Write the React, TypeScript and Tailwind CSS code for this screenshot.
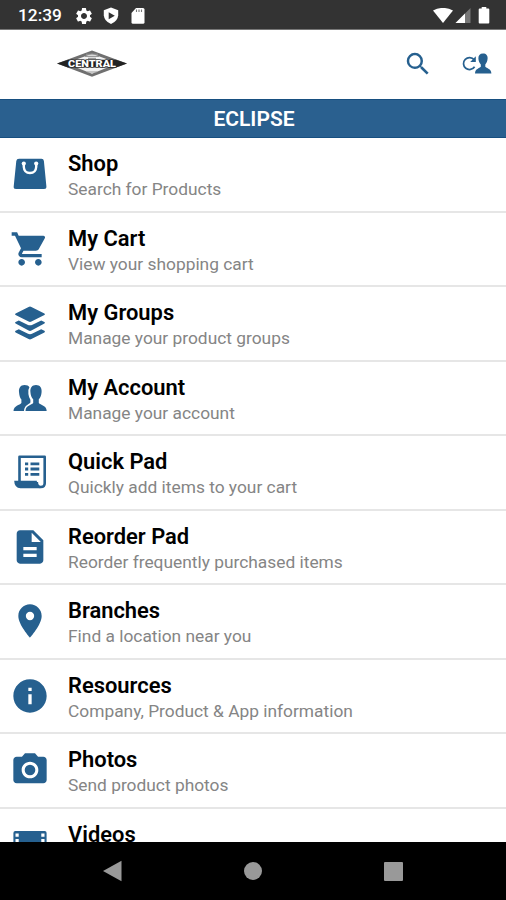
import type { ReactNode } from 'react';
import { MdDescription, MdInfo, MdLocationOn, MdPhotoCamera, MdSearch, MdSettings, MdShoppingCart } from 'react-icons/md';

type MenuItem = {
  title: string;
  subtitle?: string;
  icon: ReactNode;
};

const BagIcon = () => (
  <svg viewBox="0 0 40 40" className="h-10 w-10" fill="currentColor">
    <path d="M9 4.8H31.5Q33.6 4.8 33.9 7L36.4 32.5Q36.6 35 34 35H6Q3.4 35 3.7 32.5L6.3 7Q6.6 4.8 9 4.8Z" />
    <path d="M13.8 9.3V13Q14.2 19 20 19Q25.8 19 26.2 13V9.3" fill="none" stroke="white" strokeWidth="2.4" />
    <circle cx="13.8" cy="9.6" r="2.1" fill="white" />
    <circle cx="26.2" cy="9.6" r="2.1" fill="white" />
  </svg>
);

const LayersIcon = () => (
  <svg viewBox="0 0 40 40" className="h-10 w-10" fill="currentColor">
    <path d="M18.6 3.9Q20 3.3 21.4 3.9L34.4 10.4Q35.6 11.3 34.4 12.1L21.4 18.6Q20 19.3 18.6 18.6L5.6 12.1Q4.4 11.3 5.6 10.4Z" />
    <path d="M5.6 18.9L8.8 17.5L17.5 21.8Q20 22.9 22.5 21.8L31.2 17.5L34.4 18.9Q35.6 19.8 34.4 20.6L21.4 27.6Q20 28.3 18.6 27.6L5.6 20.6Q4.4 19.8 5.6 18.9Z" />
    <path d="M5.6 27.7L8.8 26.3L17.5 30.6Q20 31.7 22.5 30.6L31.2 26.3L34.4 27.7Q35.6 28.6 34.4 29.4L21.4 36.1Q20 36.8 18.6 36.1L5.6 29.4Q4.4 28.6 5.6 27.7Z" />
  </svg>
);

const PeopleIcon = () => (
  <svg viewBox="0 0 40 40" className="h-10 w-10" fill="currentColor">
    <path d="M14.4 7C17 7 18.6 7.8 19.4 9.2Q17.6 12 18.4 16Q18.8 19.5 20.4 21.8V24.6C19 26.6 14.6 26.8 14 33H3.5C3.6 27.6 9.8 27.2 11.4 25V21.4C10 20 9.3 17.4 9 14C8.6 9.8 10.8 7 14.4 7Z" />
    <path d="M26 7C30 7 32 9.8 31.6 14C31.4 17.4 30.4 19.6 28.8 21.2V25C30.4 27.2 36.5 27.2 36.7 33H15.5C15.7 27.2 21.6 27.2 23.2 25V21.2C21.6 19.6 20.6 17.4 20.4 14C20 9.8 22 7 26 7Z" stroke="white" strokeWidth="1.8" paintOrder="stroke" />
    <path d="M3.5 33H36.7V35H3.5Z" fill="white" />
  </svg>
);

const ListScrollIcon = () => (
  <svg viewBox="0 0 40 40" className="h-10 w-10" fill="none" stroke="currentColor">
    <path d="M9.5 29V4.8H34.7V31.2Q34.7 35 30.8 35Q26.8 35 26.8 29.9" strokeWidth="2.6" strokeLinejoin="round" />
    <path d="M4.2 28.8H26.8Q26.8 34.4 30.5 36.3H10.5Q4.4 36 4.2 28.8Z" fill="currentColor" stroke="none" />
    <path d="M15 11.8H18.2M15 17H18.2M15 22.3H18.2M20.5 11.8H29.3M20.5 17H29.3M20.5 22.3H29.3" strokeWidth="2.8" />
  </svg>
);

const FilmIcon = () => (
  <svg viewBox="0 0 40 40" className="h-10 w-10" fill="currentColor">
    <rect x="3.4" y="6" width="33.2" height="28" rx="2" />
    <path d="M5.5 8.5H8.7V11.7H5.5ZM5.5 14H8.7V17.2H5.5ZM31.3 8.5H34.5V11.7H31.3ZM31.3 14H34.5V17.2H31.3Z" fill="white" />
  </svg>
);

const SwitchUserIcon = () => (
  <svg viewBox="0 0 30 22" className="h-[22px] w-[30px]" fill="currentColor">
    <path d="M12.2 6.8A6 6 0 1 0 12.6 13.7" fill="none" stroke="currentColor" strokeWidth="1.7" />
    <path d="M13.8 3.2V8.9H8.2Z" />
    <path d="M21 .4C24.2 .4 25.9 2.4 25.6 5.6C25.4 8.4 24.5 10.2 23.3 11.4V13.8C24.6 15.6 29.2 15.5 29.4 20.4H13C13.2 15.5 17.4 15.6 18.8 13.8V11.4C17.5 10.2 16.6 8.4 16.4 5.6C16.2 2.4 17.8 .4 21 .4Z" />
  </svg>
);

const Logo = () => (
  <svg viewBox="0 0 72 28" className="h-7 w-[72px]">
    <path d="M1 13.5L36 .5L71 13.5L36 26.7Z" fill="#707070" />
    <path d="M10 13.2L36 3.8L62 13.2L36 23.8Z" fill="#f2f2f2" />
    <path d="M30 4.2H42M29 6.4H43M32 8.4H40M31 22H41" stroke="#999" strokeWidth="1.1" />
    <path d="M1 13.5L12 9.7H60L71 13.5L60 17.4H12Z" fill="#222" />
    <text
      x="36"
      y="17"
      textAnchor="middle"
      textLength="48"
      lengthAdjust="spacingAndGlyphs"
      fontSize="9.6"
      fontWeight="900"
      fill="white"
      stroke="#222"
      strokeWidth="1"
      paintOrder="stroke"
      fontFamily="Roboto, sans-serif"
    >
      CENTRAL
    </text>
  </svg>
);

const menuItems: MenuItem[] = [
  { title: 'Shop', subtitle: 'Search for Products', icon: <BagIcon /> },
  { title: 'My Cart', subtitle: 'View your shopping cart', icon: <MdShoppingCart size={40} /> },
  { title: 'My Groups', subtitle: 'Manage your product groups', icon: <LayersIcon /> },
  { title: 'My Account', subtitle: 'Manage your account', icon: <PeopleIcon /> },
  { title: 'Quick Pad', subtitle: 'Quickly add items to your cart', icon: <ListScrollIcon /> },
  { title: 'Reorder Pad', subtitle: 'Reorder frequently purchased items', icon: <MdDescription size={40} /> },
  { title: 'Branches', subtitle: 'Find a location near you', icon: <MdLocationOn size={40} /> },
  { title: 'Resources', subtitle: 'Company, Product & App information', icon: <MdInfo size={40} /> },
  { title: 'Photos', subtitle: 'Send product photos', icon: <MdPhotoCamera size={40} /> },
  { title: 'Videos', icon: <FilmIcon /> },
];

function StatusBar() {
  return (
    <div className="flex h-[30px] shrink-0 items-center border-b border-[#777] bg-[#333] pr-[16px] pl-[18px] pt-[2px] text-white">
      <span className="w-[56px] pt-px text-[17.3px] leading-none font-medium">12:39</span>
      <MdSettings size={20} />
      <svg viewBox="0 0 16 18" className="ml-[9px] h-[18px] w-4" fill="white">
        <path d="M8 .4L15.2 3.2V8.2Q14.7 14.2 8 17Q1.3 14.2 .8 8.2V3.2Z" />
        <path d="M5.7 5.2L11.8 8.7L5.7 12.2Z" fill="#333" />
      </svg>
      <svg viewBox="0 0 14 18" className="ml-[12px] h-[18px] w-[14px]" fill="white">
        <path d="M5 1H12Q13.5 1 13.5 2.5V15.3Q13.5 16.8 12 16.8H2Q.5 16.8 .5 15.3V6Z" />
        <path d="M5.5 2.6V5M8 2.6V5M10.5 2.6V5" stroke="#777" strokeWidth="1.1" />
      </svg>
      <div className="ml-auto flex items-center">
        <svg viewBox="0 0 20 16" className="h-4 w-5" fill="white">
          <path d="M0 2.6Q10 -2.8 20 2.6L10 15Z" />
        </svg>
        <svg viewBox="0 0 16 16" className="ml-[2px] h-4 w-4">
          <path d="M15.5 0V15H.5Z" fill="#777" />
          <path d="M10 5.5V15H.5Z" fill="white" />
        </svg>
        <svg viewBox="0 0 12 18" className="ml-[7px] h-[18px] w-3" fill="white">
          <path d="M3.7 0H8.3V1.6H10.3Q11.3 1.6 11.3 2.6V15.4Q11.3 16.4 10.3 16.4H1.7Q.7 16.4 .7 15.4V2.6Q.7 1.6 1.7 1.6H3.7Z" />
        </svg>
      </div>
    </div>
  );
}

function Header() {
  return (
    <div className="flex h-[69px] shrink-0 items-center bg-white pr-[14px] pb-px pl-14 text-[#26608f]">
      <Logo />
      <MdSearch size={30} className="ml-auto" />
      <div className="ml-[29px]">
        <SwitchUserIcon />
      </div>
    </div>
  );
}

function MenuRow({ item }: { item: MenuItem }) {
  return (
    <div className="flex h-[74.55px] shrink-0 items-start border-b-2 border-[#e6e6e6] pl-[10px]">
      <div className="w-[58px] pt-[16px] text-[#26608f]">{item.icon}</div>
      <div className="pt-[13px]">
        <div className="text-[21.9px] leading-[26px] font-semibold text-black">{item.title}</div>
        {item.subtitle && (
          <div className="text-[17.35px] leading-[25.5px] text-[#858585]">{item.subtitle}</div>
        )}
      </div>
    </div>
  );
}

function NavBar() {
  return (
    <div className="flex h-[58px] shrink-0 items-center justify-between bg-black px-[103px]">
      <svg viewBox="0 0 19 22" className="h-[22px] w-[19px]">
        <path d="M0 11L18.5 .8V21.2Z" fill="#999" />
      </svg>
      <div className="h-[18px] w-[18px] rounded-full bg-[#999]" />
      <div className="h-[19px] w-[19px] rounded-[1px] bg-[#999]" />
    </div>
  );
}

function App() {
  return (
    <div className="flex h-[900px] w-[506px] flex-col overflow-hidden bg-white font-['Roboto',sans-serif]">
      <StatusBar />
      <Header />
      <div className="flex h-[39px] shrink-0 items-center justify-center border-y border-[#174f80] bg-[#2a608f] pt-[2px] pl-[2px] text-[21px] font-semibold text-white">
        ECLIPSE
      </div>
      <div className="flex min-h-0 flex-1 flex-col overflow-hidden">
        {menuItems.map((item) => (
          <MenuRow key={item.title} item={item} />
        ))}
      </div>
      <NavBar />
    </div>
  );
}

export default App;
